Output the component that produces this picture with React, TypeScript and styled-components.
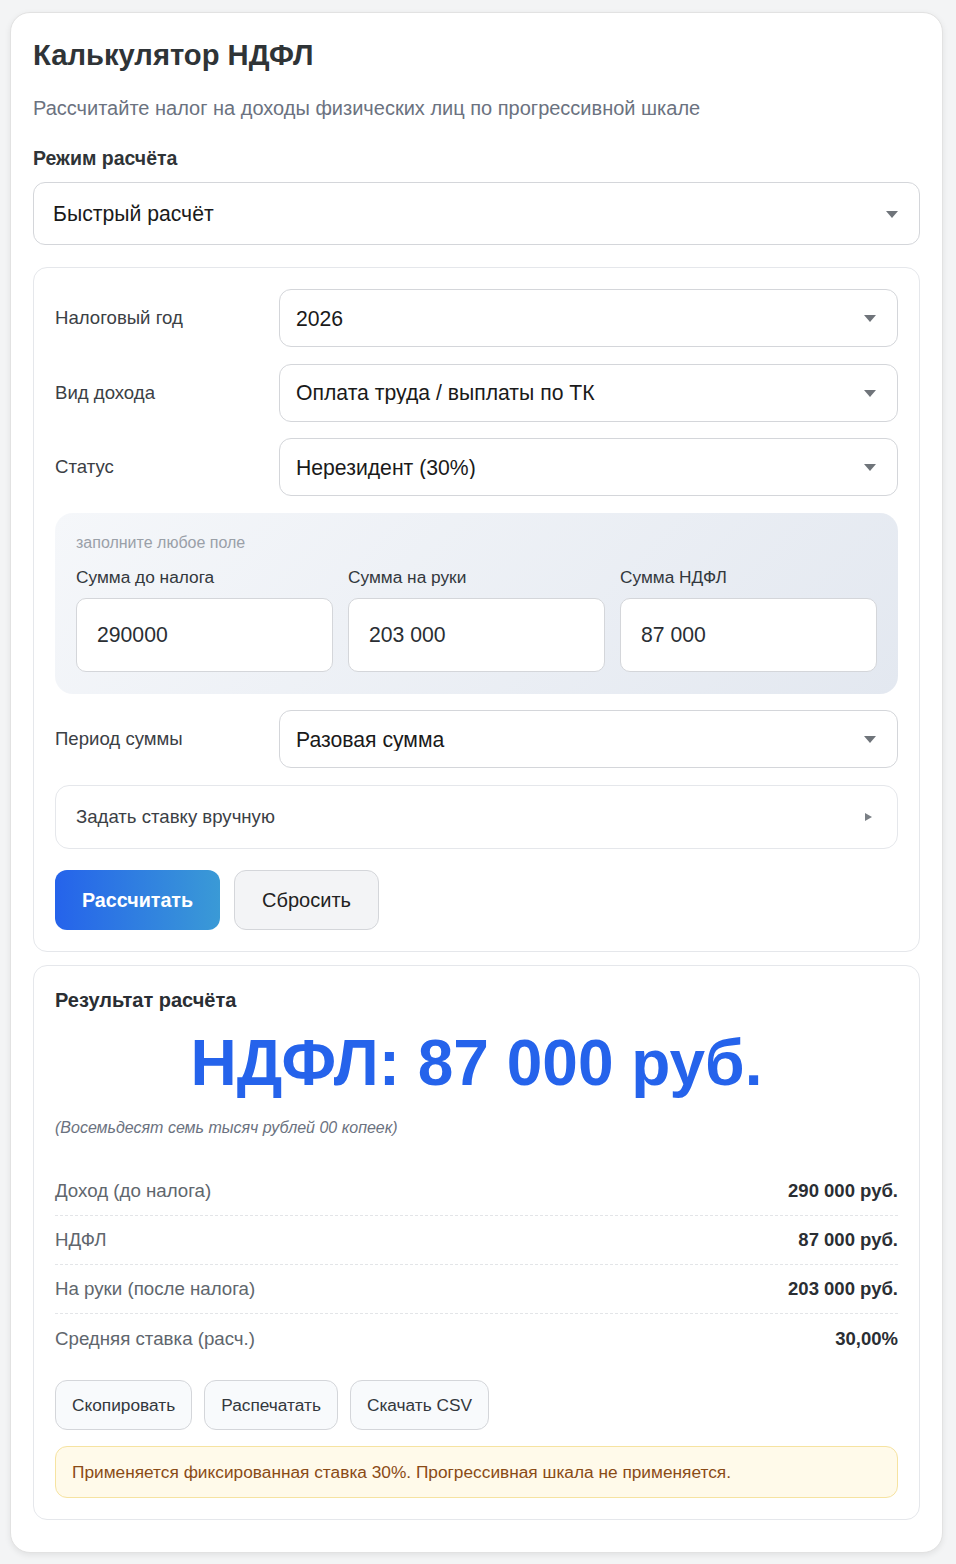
import * as React from 'react';
import styled, { createGlobalStyle } from 'styled-components';

const GlobalStyle = createGlobalStyle`
    html, body {
        margin: 0;
        padding: 0;
        background: #f3f4f5;
    }
    * {
        box-sizing: border-box;
        font-family: "Liberation Sans", Arial, sans-serif;
    }
`

const Card = styled.main`
    margin: 12px 13px 10px 10px;
    padding: 25px 22px 32px;
    background: #fff;
    border: 1px solid #e2e2e2;
    border-radius: 20px;
    box-shadow: 0 2px 6px rgba(0, 0, 0, 0.08);
`

const Title = styled.h1`
    margin: 0;
    font-size: 29.2px;
    line-height: 34px;
    font-weight: 700;
    color: #2f3437;
`

const Subtitle = styled.p`
    margin: 23px 0 0;
    font-size: 20px;
    line-height: 26px;
    color: #6b7280;
`

const ModeLabel = styled.div`
    margin: 25px 0 12px;
    font-size: 19.5px;
    line-height: 24px;
    font-weight: 700;
    color: #2f3437;
`

const Panel = styled.section<{ gap?: number }>`
    display: flex;
    flex-direction: column;
    gap: ${p => p.gap ?? 16.5}px;
    margin-top: ${p => p.gap === 0 ? 13 : 22}px;
    padding: 21px 21px 21px;
    border: 1px solid #e5e7eb;
    border-radius: 14px;
    background: #fff;
`

const SelectWrap = styled.div`
    position: relative;
    flex: 1;

    &::after {
        content: "";
        position: absolute;
        right: 22px;
        top: 50%;
        margin-top: -3px;
        border-left: 6px solid transparent;
        border-right: 6px solid transparent;
        border-top: 7px solid #6f747a;
        pointer-events: none;
    }
`

const Select = styled.select<{ big?: boolean }>`
    appearance: none;
    width: 100%;
    height: ${p => p.big ? 63 : 58}px;
    padding: 0 48px 0 ${p => p.big ? 19 : 16}px;
    border: 1px solid #d4d6da;
    border-radius: 12px;
    background: #fff;
    font-size: 21.2px;
    color: #1a1a1a;
    outline: none;
`

const FieldRow = styled.div`
    display: flex;
    align-items: center;
`

const FieldLabel = styled.label`
    width: 224px;
    flex-shrink: 0;
    font-size: 18.6px;
    color: #3b4045;
`

const AmountGroup = styled.div`
    padding: 20px 21px 22px;
    border-radius: 18px;
    background: linear-gradient(135deg, #f5f7fa 0%, #e3e8f0 100%);
`

const Hint = styled.div`
    font-size: 16px;
    line-height: 20px;
    color: #9aa0a8;
`

const AmountGrid = styled.div`
    display: grid;
    grid-template-columns: repeat(3, minmax(0, 1fr));
    gap: 15px;
    margin-top: 13px;
`

const AmountField = styled.div`
    display: flex;
    flex-direction: column;
    gap: 10px;
`

const AmountLabel = styled.label`
    font-size: 17.3px;
    line-height: 22px;
    color: #33383d;
`

const AmountInput = styled.input`
    width: 100%;
    min-width: 0;
    height: 74px;
    padding: 0 20px;
    border: 1px solid #d4d6da;
    border-radius: 10px;
    background: #fff;
    font-size: 21.2px;
    color: #2a2e33;
    outline: none;
`

const Details = styled.details`
    border: 1px solid #e5e7eb;
    border-radius: 14px;
`

const Summary = styled.summary`
    display: flex;
    align-items: center;
    justify-content: space-between;
    height: 62px;
    padding: 0 25px 0 20px;
    list-style: none;
    font-size: 18.6px;
    color: #3b4045;
    cursor: pointer;

    &::-webkit-details-marker {
        display: none;
    }
`

const Caret = styled.span`
    width: 0;
    height: 0;
    border-top: 4px solid transparent;
    border-bottom: 4px solid transparent;
    border-left: 7px solid #7a7f85;
`

const ButtonRow = styled.div<{ top?: number }>`
    display: flex;
    gap: ${p => p.top && p.top > 10 ? 12 : 14}px;
    margin-top: ${p => p.top ?? 0}px;
`

const PrimaryButton = styled.button`
    height: 60px;
    padding: 0 27px;
    border: 0;
    border-radius: 12px;
    background: linear-gradient(90deg, #2563eb 0%, #3a9ad6 100%);
    color: #fff;
    font-size: 19.7px;
    font-weight: 700;
    cursor: pointer;
`

const SecondaryButton = styled.button`
    height: 60px;
    padding: 0 27px;
    border: 1px solid #d4d6da;
    border-radius: 12px;
    background: #f3f4f6;
    color: #222;
    font-size: 20px;
    cursor: pointer;
`

const ResultTitle = styled.h2`
    margin: 0;
    font-size: 20px;
    line-height: 26px;
    font-weight: 700;
    color: #2a2e33;
`

const BigValue = styled.div`
    margin-top: 13px;
    text-align: center;
    font-size: 64px;
    line-height: 74px;
    font-weight: 700;
    color: #2563eb;
`

const InWords = styled.div`
    margin-top: 18px;
    font-size: 16px;
    line-height: 20px;
    font-style: italic;
    color: #6b7280;
`

const Rows = styled.div`
    margin-top: 29px;
`

const ResultRow = styled.div`
    display: flex;
    justify-content: space-between;
    align-items: center;
    height: 49px;
    font-size: 18.7px;
    border-bottom: 1px dashed #e3e5e8;

    &:last-child {
        border-bottom: 0;
    }
`

const RowLabel = styled.span`
    color: #60666d;
`

const RowValue = styled.span`
    font-weight: 700;
    font-size: 18.5px;
    color: #2a2e33;
`

const ActionButton = styled.button`
    height: 50px;
    padding: 0 16px;
    border: 1px solid #d4d6da;
    border-radius: 12px;
    background: #f8fafc;
    color: #33383d;
    font-size: 17.3px;
    cursor: pointer;
`

const Notice = styled.div`
    margin-top: 16px;
    padding: 15px 16px;
    border: 1px solid #f6e3a1;
    border-radius: 12px;
    background: #fffaea;
    color: #8a4b16;
    font-size: 17.3px;
    line-height: 20px;
`

const fields = [
    { label: 'Налоговый год', value: '2026' },
    { label: 'Вид дохода', value: 'Оплата труда / выплаты по ТК' },
    { label: 'Статус', value: 'Нерезидент (30%)' },
];

const amounts = [
    { label: 'Сумма до налога', value: '290000' },
    { label: 'Сумма на руки', value: '203 000' },
    { label: 'Сумма НДФЛ', value: '87 000' },
];

const summary = [
    { label: 'Доход (до налога)', value: '290 000 руб.' },
    { label: 'НДФЛ', value: '87 000 руб.' },
    { label: 'На руки (после налога)', value: '203 000 руб.' },
    { label: 'Средняя ставка (расч.)', value: '30,00%' },
];

const SelectField = ({ label, value }: { label: string; value: string }) => (
    <FieldRow>
        <FieldLabel>{label}</FieldLabel>
        <SelectWrap>
            <Select defaultValue={value}>
                <option>{value}</option>
            </Select>
        </SelectWrap>
    </FieldRow>
);

export default function App() {
    return (
        <>
            <GlobalStyle />
            <Card>
                <Title>Калькулятор НДФЛ</Title>
                <Subtitle>Рассчитайте налог на доходы физических лиц по прогрессивной шкале</Subtitle>

                <ModeLabel>Режим расчёта</ModeLabel>
                <SelectWrap>
                    <Select big defaultValue="Быстрый расчёт">
                        <option>Быстрый расчёт</option>
                    </Select>
                </SelectWrap>

                <Panel>
                    {fields.map(f => <SelectField key={f.label} {...f} />)}

                    <AmountGroup>
                        <Hint>заполните любое поле</Hint>
                        <AmountGrid>
                            {amounts.map(a => (
                                <AmountField key={a.label}>
                                    <AmountLabel>{a.label}</AmountLabel>
                                    <AmountInput defaultValue={a.value} />
                                </AmountField>
                            ))}
                        </AmountGrid>
                    </AmountGroup>

                    <SelectField label="Период суммы" value="Разовая сумма" />

                    <Details>
                        <Summary>
                            Задать ставку вручную
                            <Caret />
                        </Summary>
                    </Details>

                    <ButtonRow top={5}>
                        <PrimaryButton>Рассчитать</PrimaryButton>
                        <SecondaryButton>Сбросить</SecondaryButton>
                    </ButtonRow>
                </Panel>

                <Panel gap={0}>
                    <ResultTitle>Результат расчёта</ResultTitle>
                    <BigValue>НДФЛ: 87 000 руб.</BigValue>
                    <InWords>(Восемьдесят семь тысяч рублей 00 копеек)</InWords>
                    <Rows>
                        {summary.map(r => (
                            <ResultRow key={r.label}>
                                <RowLabel>{r.label}</RowLabel>
                                <RowValue>{r.value}</RowValue>
                            </ResultRow>
                        ))}
                    </Rows>
                    <ButtonRow top={17}>
                        <ActionButton>Скопировать</ActionButton>
                        <ActionButton>Распечатать</ActionButton>
                        <ActionButton>Скачать CSV</ActionButton>
                    </ButtonRow>
                    <Notice>Применяется фиксированная ставка 30%. Прогрессивная шкала не применяется.</Notice>
                </Panel>
            </Card>
        </>
    );
}
